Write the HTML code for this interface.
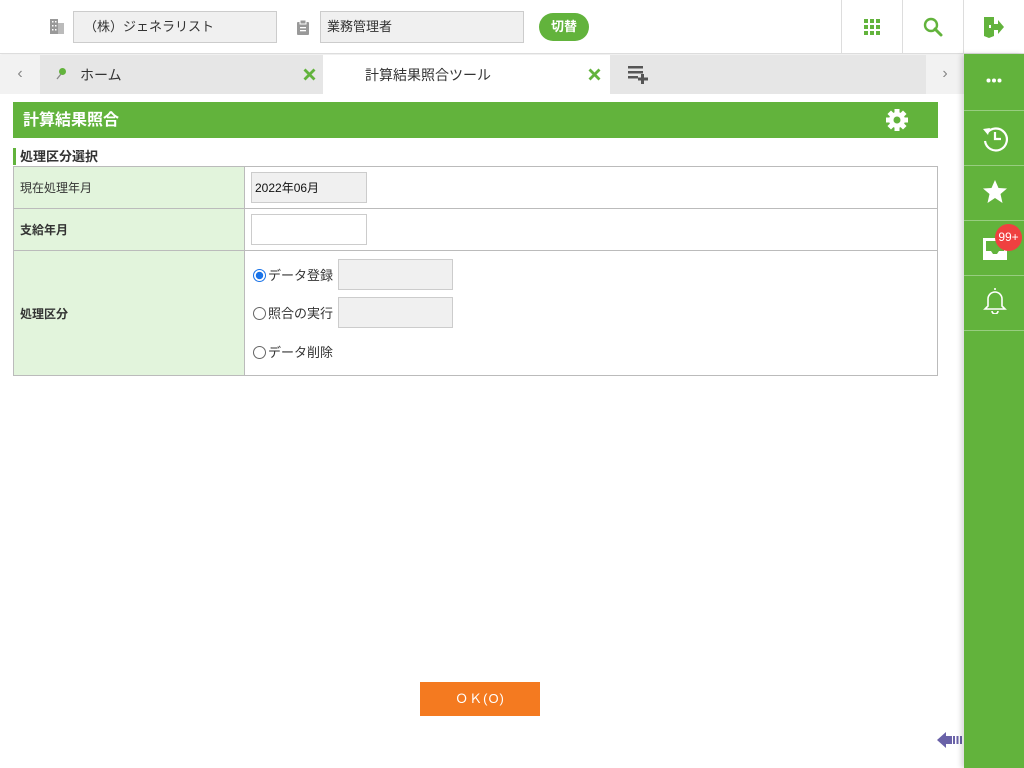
<!DOCTYPE html>
<html><head><meta charset="utf-8"><style>
*{box-sizing:border-box;margin:0;padding:0}
body{width:1024px;height:768px;position:relative;overflow:hidden;background:#fff;font-family:"Liberation Sans","Noto Sans CJK JP",sans-serif;font-size:13px;color:#333}
.abs{position:absolute}
.inp{position:absolute;background:#f0f0f0;border:1px solid #ccc;font-size:13px;padding-left:10px;line-height:30px;color:#333}
.vl{position:absolute;top:0;width:1px;height:54px;background:#ddd}
.side{position:absolute;left:964px;top:54px;width:60px;height:714px;background:#62b33c;box-shadow:-3px 0 5px rgba(0,0,0,.15)}
.sd{position:absolute;left:0;width:60px;height:1px;background:rgba(255,255,255,.35)}
table{position:absolute;left:13px;top:166px;width:925px;border-collapse:collapse}
td{border:1px solid #bbb;font-size:12px}
td.l{background:#e2f4dc;width:231px;padding-left:6px}
.rb{display:inline-block;width:13px;height:13px;border-radius:50%;border:1px solid #666;vertical-align:-2px;margin-right:2px}
</style></head><body>
<div class="abs" style="left:0;top:0;width:1024px;height:54px;border-bottom:1px solid #ddd;box-shadow:0 1px 3px rgba(0,0,0,.1)"></div>
<svg class="abs" style="left:49px;top:18px" width="16" height="17"><rect x="1" y="1" width="8" height="15" fill="#999"/><rect x="9" y="5" width="6" height="11" fill="#bbb"/><g fill="#fff"><rect x="3" y="3" width="1.5" height="1.5"/><rect x="6" y="3" width="1.5" height="1.5"/><rect x="3" y="7" width="1.5" height="1.5"/><rect x="6" y="7" width="1.5" height="1.5"/><rect x="3" y="11" width="1.5" height="1.5"/><rect x="6" y="11" width="1.5" height="1.5"/></g></svg>
<div class="inp" style="left:73px;top:11px;width:204px;height:32px">（株）ジェネラリスト</div>
<svg class="abs" style="left:296px;top:19px" width="14" height="17"><rect x="1" y="3" width="12" height="13" rx="1" fill="#999"/><rect x="4" y="1" width="6" height="4" fill="#999" stroke="#fff" stroke-width="1"/><rect x="4" y="8" width="6" height="1.3" fill="#fff"/><rect x="4" y="11" width="6" height="1.3" fill="#fff"/></svg>
<div class="inp" style="left:320px;top:11px;width:204px;height:32px;padding-left:6px">業務管理者</div>
<div class="abs" style="left:539px;top:13px;width:50px;height:28px;border-radius:14px;background:#62b33c;color:#fff;font-size:13px;text-align:center;line-height:28px;font-weight:bold">切替</div>
<div class="vl" style="left:841px"></div><div class="vl" style="left:902px"></div><div class="vl" style="left:963px"></div>
<svg class="abs" style="left:864px;top:19px" width="16" height="16" fill="#62b33c"><rect x="0" y="0" width="4" height="4"/><rect x="6" y="0" width="4" height="4"/><rect x="12" y="0" width="4" height="4"/><rect x="0" y="6" width="4" height="4"/><rect x="6" y="6" width="4" height="4"/><rect x="12" y="6" width="4" height="4"/><rect x="0" y="12" width="4" height="4"/><rect x="6" y="12" width="4" height="4"/><rect x="12" y="12" width="4" height="4"/></svg>
<svg class="abs" style="left:923px;top:17px" width="20" height="20"><circle cx="8" cy="8" r="6" fill="none" stroke="#62b33c" stroke-width="2.4"/><path d="M12 12 L18 18" stroke="#62b33c" stroke-width="3" stroke-linecap="round"/></svg>
<svg class="abs" style="left:983px;top:16px" width="22" height="22" fill="#62b33c"><path d="M1 1 H11 V20 L6 22 L1 20 Z"/><path d="M11 8 H15 V4 L21 11 L15 18 V14 H11 Z"/><rect x="6" y="9" width="2" height="3" fill="#fff"/></svg>
<div class="abs" style="left:0;top:55px;width:964px;height:39px;background:#e6e6e6"></div>
<div class="abs" style="left:0;top:55px;width:40px;height:39px;background:#f2f2f2;color:#888;font-size:16px;text-align:center;line-height:38px">‹</div>
<div class="abs" style="left:926px;top:55px;width:38px;height:39px;background:#f2f2f2;color:#888;font-size:16px;text-align:center;line-height:38px">›</div>
<svg class="abs" style="left:55px;top:67px" width="12" height="13"><circle cx="7.5" cy="4.5" r="3.5" fill="#62b33c"/><path d="M6 7 L2 12" stroke="#888" stroke-width="1.3"/></svg>
<div class="abs" style="left:80px;top:65px;font-size:14px;color:#333">ホーム</div>
<svg class="abs" style="left:303px;top:68px" width="13" height="13"><path d="M1.5 1.5 L11.5 11.5 M11.5 1.5 L1.5 11.5" stroke="#62b33c" stroke-width="2.8"/></svg>
<div class="abs" style="left:323px;top:55px;width:287px;height:39px;background:#fff"></div>
<div class="abs" style="left:365px;top:65px;font-size:14px;color:#333">計算結果照合ツール</div>
<svg class="abs" style="left:588px;top:68px" width="13" height="13"><path d="M1.5 1.5 L11.5 11.5 M11.5 1.5 L1.5 11.5" stroke="#62b33c" stroke-width="2.8"/></svg>
<svg class="abs" style="left:628px;top:66px" width="25" height="18" fill="#555"><rect x="0" y="0" width="15" height="2.5"/><rect x="0" y="5" width="15" height="2.5"/><rect x="0" y="10" width="10" height="2.5"/><rect x="13" y="8" width="3" height="10"/><rect x="10" y="11.5" width="10" height="3"/></svg>
<div class="abs" style="left:13px;top:102px;width:925px;height:36px;background:#62b33c"></div>
<div class="abs" style="left:23px;top:106px;color:#fff;font-size:16px;font-weight:bold">計算結果照合</div>
<svg class="abs" style="left:885px;top:108px" width="24" height="24" viewBox="0 0 24 24"><g fill="#fff" transform="translate(12 12)"><rect x="-2.5" y="-11" width="5" height="22"/><rect x="-2.5" y="-11" width="5" height="22" transform="rotate(45)"/><rect x="-2.5" y="-11" width="5" height="22" transform="rotate(90)"/><rect x="-2.5" y="-11" width="5" height="22" transform="rotate(135)"/><circle r="8"/></g><circle cx="12" cy="12" r="3.5" fill="#62b33c"/></svg>
<div class="abs" style="left:13px;top:148px;height:17px;border-left:3px solid #62b33c;padding-left:4px;font-size:13px;font-weight:bold;line-height:17px">処理区分選択</div>
<table>
<tr style="height:42px"><td class="l">現在処理年月</td><td style="position:relative"><div class="inp" style="left:6px;top:5px;width:116px;height:31px;padding-left:3px;font-size:12px;color:#111">2022年06月</div></td></tr>
<tr style="height:42px"><td class="l" style="font-weight:bold">支給年月</td><td style="position:relative"><div class="inp" style="left:6px;top:5px;width:116px;height:31px;background:#fff"></div></td></tr>
<tr style="height:125px"><td class="l" style="font-weight:bold">処理区分</td><td style="position:relative;font-size:13px">
<div class="abs" style="left:8px;top:14px"><span class="rb" style="border-color:#1a73e8;background:radial-gradient(#1a73e8 45%,#fff 50%)"></span>データ登録</div>
<div class="inp" style="left:93px;top:8px;width:115px;height:31px"></div>
<div class="abs" style="left:8px;top:52px"><span class="rb"></span>照合の実行</div>
<div class="inp" style="left:93px;top:46px;width:115px;height:31px"></div>
<div class="abs" style="left:8px;top:91px"><span class="rb"></span>データ削除</div>
</td></tr>
</table>
<div class="abs" style="left:420px;top:682px;width:120px;height:34px;background:#f47a20;color:#fff;text-align:center;line-height:34px;font-size:13px;letter-spacing:1px">ＯＫ(O)</div>
<svg class="abs" style="left:937px;top:730px" width="26" height="20" fill="#6a62a8"><path d="M0 10 L9 2 V6 H15 V14 H9 V18 Z"/><rect x="16" y="6" width="2" height="8"/><rect x="19.5" y="6" width="2" height="8"/><rect x="23" y="6" width="2" height="8"/></svg>
<div class="side">
<svg class="abs" style="left:22px;top:24px" width="16" height="5" fill="#fff"><circle cx="2.5" cy="2.5" r="2"/><circle cx="8" cy="2.5" r="2"/><circle cx="13.5" cy="2.5" r="2"/></svg>
<div class="sd" style="top:56px"></div><div class="sd" style="top:111px"></div><div class="sd" style="top:166px"></div><div class="sd" style="top:221px"></div><div class="sd" style="top:276px"></div>
<svg class="abs" style="left:17px;top:70px" width="28" height="28"><path d="M6 9 A11 11 0 1 1 4 17" fill="none" stroke="#fff" stroke-width="2.2"/><path d="M2 5 L9 4 L7 11 Z" fill="#fff"/><path d="M14 8 V15 H20" fill="none" stroke="#fff" stroke-width="2.2"/></svg>
<svg class="abs" style="left:18px;top:125px" width="26" height="25"><path d="M13 1 L16.5 9 L25 9.5 L18.5 15 L20.5 24 L13 19 L5.5 24 L7.5 15 L1 9.5 L9.5 9 Z" fill="#fff"/></svg>
<svg class="abs" style="left:18px;top:180px" width="26" height="26"><path d="M1 4 H25 V26 H1 Z" fill="#fff"/><path d="M4 7 H22 V17 H17 L15 20 H11 L9 17 H4 Z" fill="#62b33c"/></svg>
<div class="abs" style="left:31px;top:170px;width:27px;height:27px;border-radius:50%;background:#ef4040;color:#fff;font-size:12px;text-align:center;line-height:27px">99+</div>
<svg class="abs" style="left:19px;top:232px" width="24" height="28"><path d="M12 2 V4 M5 20 V13 A7 7 0 0 1 19 13 V20 L22 23 H2 Z" fill="none" stroke="#fff" stroke-width="1.6"/><path d="M9 25 A3 3 0 0 0 15 25" fill="none" stroke="#fff" stroke-width="1.6"/></svg>
</div>
</body></html>
